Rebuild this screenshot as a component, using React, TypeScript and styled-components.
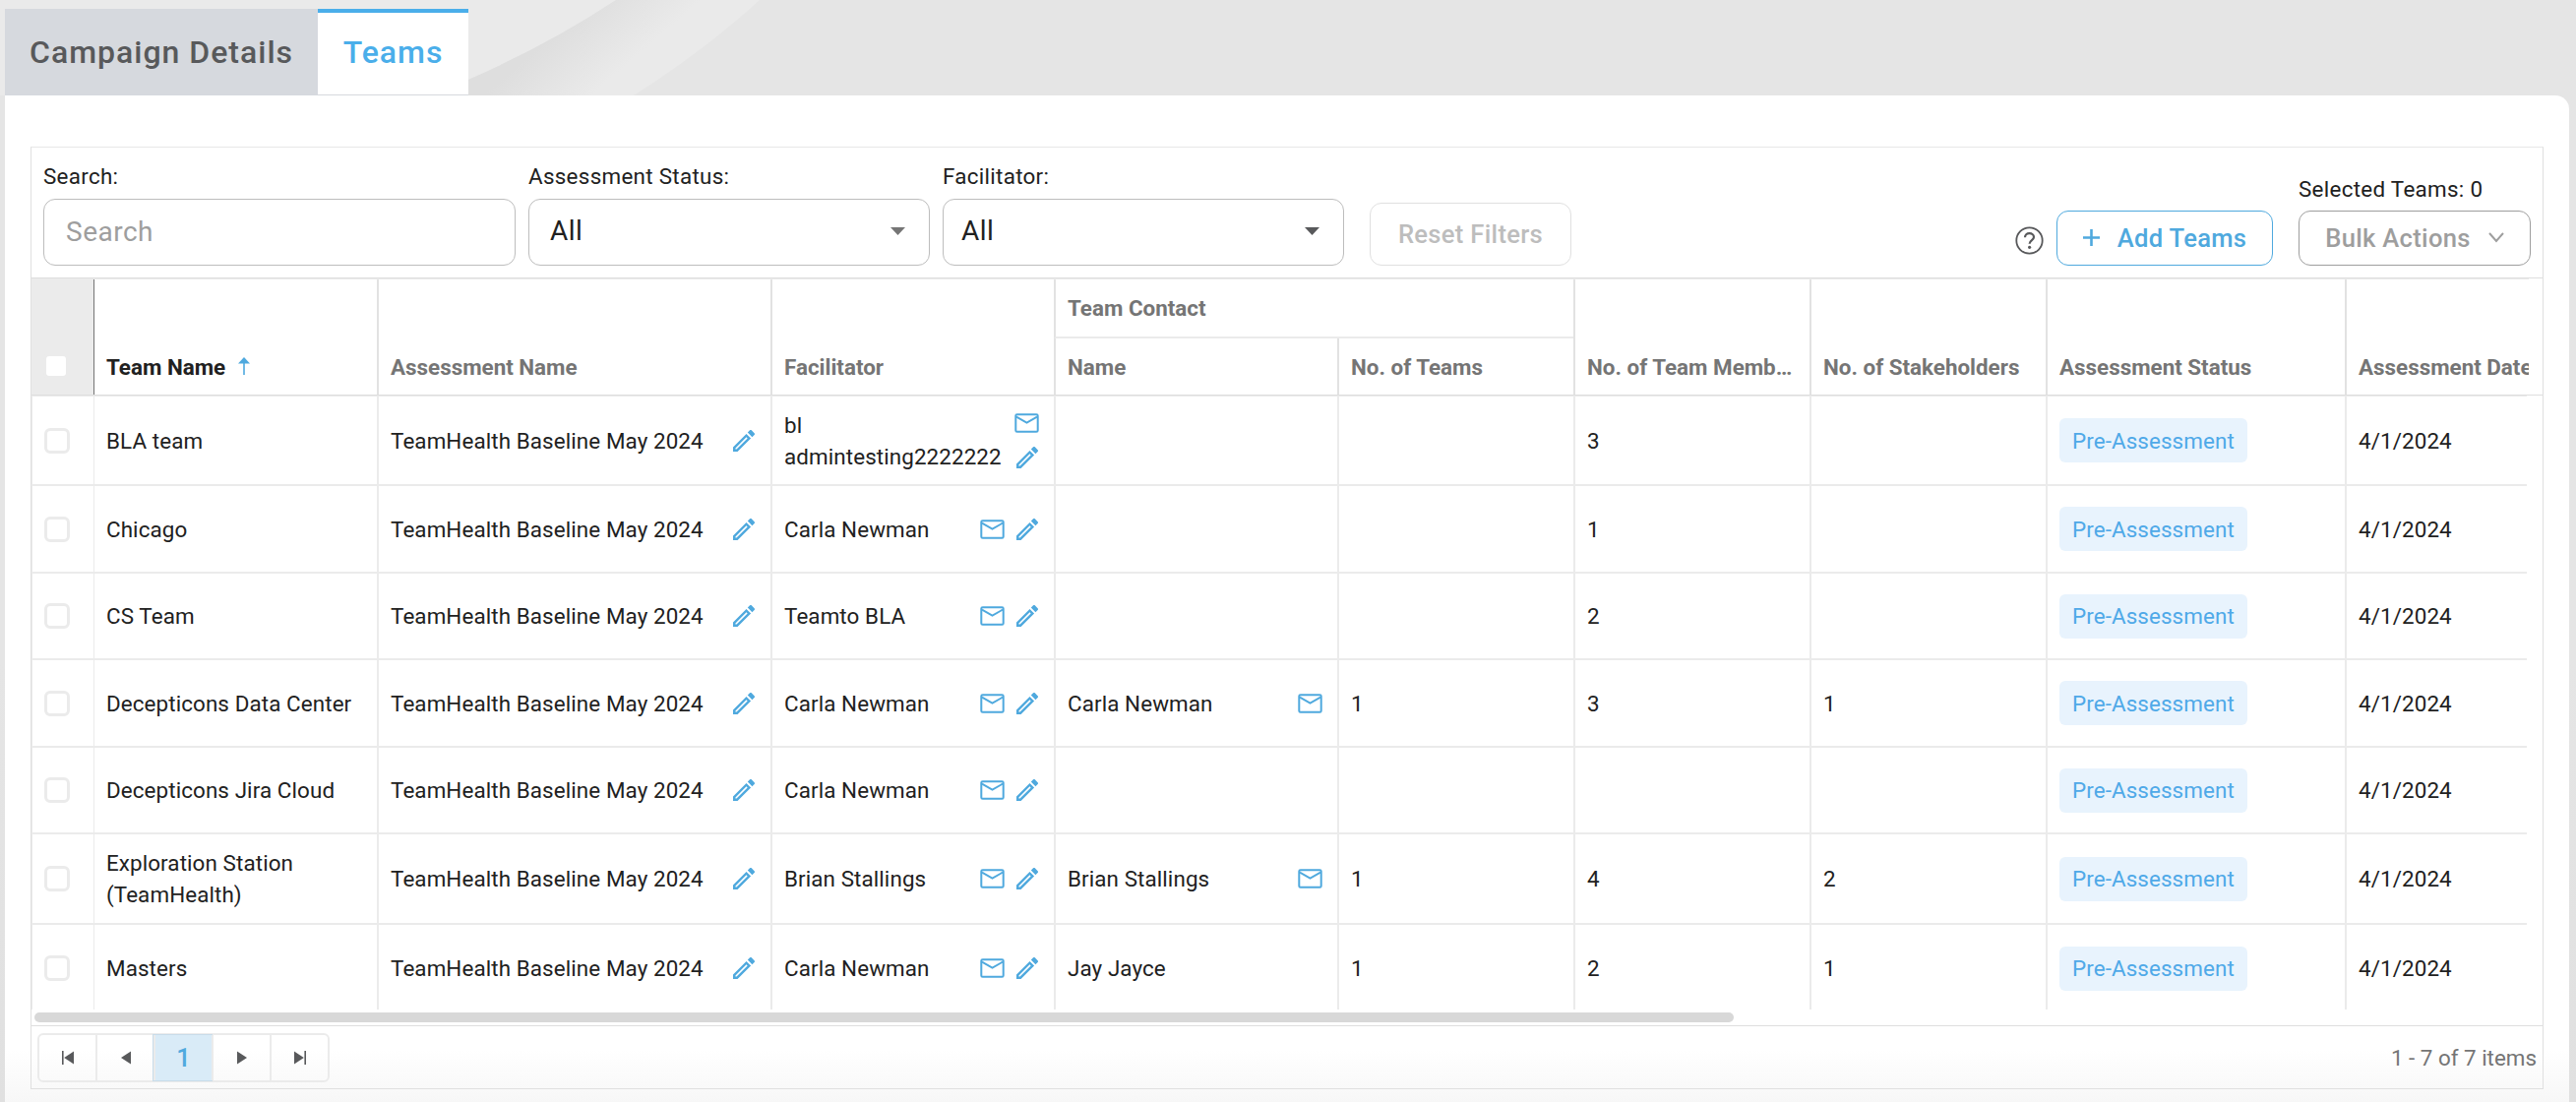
import styled, { createGlobalStyle, css } from "styled-components";

const GlobalStyle = createGlobalStyle`
	* {
		box-sizing: border-box;
	}
	body {
		margin: 0;
		background-color: #e5e5e5;
		font-family: Roboto, "Liberation Sans", sans-serif;
		font-size: 22.4px;
		line-height: 32px;
		color: #212121;
	}
	button, input {
		font-family: inherit;
	}
`;

const COLUMNS = "64px 287px 400px 288px 288px 240px 240px 240px 304px 187px";

const Page = styled.div`
	height: 1120px;
	overflow: hidden;
	position: relative;
	background: linear-gradient(#e5e5e5 60%, #e0e0e0);
`;

const Swoosh = styled.svg`
	position: absolute;
	top: 0;
	left: 0;
`;

const Tabs = styled.div`
	position: relative;
	display: flex;
	height: 97px;
	padding: 9px 0 0 5px;
`;

const Tab = styled.div<{ $active?: boolean }>`
	width: ${({ $active }) => ($active ? 153 : 318)}px;
	height: 88px;
	display: flex;
	align-items: center;
	justify-content: center;
	font-size: 32px;
	font-weight: 500;
	letter-spacing: 1px;
	color: #58595b;
	background-color: #d6d9de;
	${({ $active }) =>
		$active &&
		css`
			color: #4aaeea;
			background-color: #fff;
			border-top: 4px solid #4aaeea;
			border-bottom: 1px solid #d6d9de;
			padding-bottom: 3px;
		`}
`;

const Card = styled.div`
	position: relative;
	width: 2606px;
	height: 1023px;
	margin-left: 5px;
	padding: 52px 26px 0;
	border-top-right-radius: 14px;
	background: linear-gradient(#fff 970px, #f7f7f7 1023px);
`;

const Grid = styled.div`
	width: 2554px;
	height: 958px;
	border: 1px solid #e0e0e0;
	border-top-color: #e8e8e8;
	display: flex;
	flex-direction: column;
`;

const Toolbar = styled.div`
	height: 133px;
	padding: 0 12px 12px;
	border-bottom: 1px solid #dedede;
	display: flex;
	align-items: flex-end;
`;

const Field = styled.div<{ $width: number }>`
	width: ${({ $width }) => $width}px;
	margin-right: 13px;
`;

const Label = styled.div`
	letter-spacing: 0.3px;
	margin-bottom: 7px;
`;

const inputBox = css`
	width: 100%;
	height: 68px;
	border: 1px solid #bdbdbd;
	border-radius: 12px;
	background-color: #fff;
	font-size: 28px;
	letter-spacing: 0.5px;
`;

const SearchInput = styled.input`
	${inputBox}
	display: block;
	padding: 0 22px 2px;
	&::placeholder {
		color: #9e9e9e;
		opacity: 1;
	}
`;

const Select = styled.div<{ $pad: number }>`
	${inputBox}
	display: flex;
	align-items: center;
	justify-content: space-between;
	padding: 0 24px 2px ${({ $pad }) => $pad}px;
`;

const Button = styled.button<{ $color: string; $border: string; $width: number }>`
	width: ${({ $width }) => $width}px;
	height: 56px;
	padding: 0 0 1px;
	display: flex;
	align-items: center;
	justify-content: center;
	border: 1px solid ${({ $border }) => $border};
	border-radius: 12px;
	background-color: #fff;
	color: ${({ $color }) => $color};
	font-size: 25.6px;
	font-weight: 500;
	letter-spacing: 0.3px;
	white-space: nowrap;
`;

const ResetButton = styled(Button)`
	height: 64px;
	margin-left: 13px;
`;

const Help = styled.svg`
	margin: 0 13px 11px auto;
`;

const Bulk = styled.div`
	margin-left: 26px;
	${Label} {
		margin-bottom: 6px;
	}
`;

const HeaderRow = styled.div`
	flex: none;
	height: 119px;
	border-bottom: 1px solid #dedede;
`;

const HeaderGrid = styled.div`
	width: 2538px;
	height: 118px;
	overflow: hidden;
	border-top: 1px solid #ebebeb;
	display: grid;
	grid-template-columns: ${COLUMNS};
	grid-template-rows: 60px 57px;
`;

const HeaderCell = styled.div<{ $sorted?: boolean; $sub?: boolean }>`
	grid-row: ${({ $sub }) => ($sub ? "2" : "1 / span 2")};
	display: flex;
	align-items: flex-end;
	padding: 0 12px 12px;
	border-left: ${({ $sorted }) => ($sorted ? "none" : "2px solid #e2e2e2")};
	font-weight: 700;
	color: ${({ $sorted }) => ($sorted ? "#212121" : "#757575")};
	white-space: nowrap;
	min-width: 0;
	svg {
		margin: 0 0 8px 13px;
	}
`;

const Ellipsis = styled.span`
	overflow: hidden;
	text-overflow: ellipsis;
`;

const GroupCell = styled(HeaderCell)`
	grid-row: 1;
	grid-column: span 2;
	align-items: center;
	padding-bottom: 0;
	border-bottom: 2px solid #ebebeb;
`;

const CheckHeader = styled.div`
	grid-row: 1 / span 2;
	display: flex;
	align-items: flex-end;
	padding: 0 0 16px 12px;
	background-color: #ebebeb;
	border-right: 1px solid #757575;
`;

const Checkbox = styled.span`
	width: 26px;
	height: 26px;
	border: 3px solid #ebebeb;
	border-radius: 6px;
	background-color: #fff;
`;

const Body = styled.div`
	width: 2536px;
	height: 640px;
	border-top: 1px solid #ebebeb;
	overflow: hidden;
	flex: none;
	height: 624px;
`;

const Row = styled.div<{ $height: number }>`
	height: ${({ $height }) => $height}px;
	display: grid;
	grid-template-columns: ${COLUMNS};
	border-bottom: 2px solid #ebebeb;
	&:last-child {
		border-bottom: none;
	}
`;

const Cell = styled.div<{ $first?: boolean }>`
	display: flex;
	align-items: center;
	justify-content: space-between;
	padding: 0 15px 0 12px;
	border-left: ${({ $first }) => ($first ? "none" : "2px solid #ebebeb")};
	min-width: 0;
	letter-spacing: 0.1px;
`;

const CheckCell = styled.div`
	display: flex;
	align-items: center;
	padding-left: 12px;
	border-left: 1px solid #ebebeb;
	border-right: 1px solid #ebebeb;
`;

const Icons = styled.div<{ $stacked?: boolean }>`
	display: flex;
	flex-direction: ${({ $stacked }) => ($stacked ? "column" : "row")};
	gap: 10px;
	flex: none;
`;

const IconSlot = styled.span`
	width: 25px;
	height: 25px;
	display: flex;
	align-items: center;
	justify-content: center;
	color: #4fa9de;
`;

const Chip = styled.span`
	height: 45px;
	padding: 0 13px;
	display: flex;
	align-items: center;
	border-radius: 6px;
	background-color: #e8f3fd;
	color: #4fa9e8;
`;

const ScrollTrack = styled.div`
	flex: none;
	height: 16px;
	padding: 3px;
`;

const ScrollThumb = styled.div`
	width: 1727px;
	height: 10px;
	border-radius: 5px;
	background-color: #d8d8d8;
`;

const Pager = styled.div`
	flex: 1;
	display: flex;
	align-items: center;
	justify-content: space-between;
	border-top: 1px solid #dedede;
	padding: 0 6px;
	color: #757575;
`;

const PageButtons = styled.div`
	display: flex;
	width: 297px;
	height: 50px;
	border: 2px solid #ebebeb;
	border-radius: 6px;
`;

const PageButton = styled.div<{ $active?: boolean }>`
	flex: 1;
	display: flex;
	align-items: center;
	justify-content: center;
	color: #58595b;
	& + & {
		border-left: 2px solid #ebebeb;
	}
	${({ $active }) =>
		$active &&
		css`
			background-color: #d9ebf7;
			box-shadow: 0 0 0 1px #c8dcea;
			color: #4fa9de;
			font-size: 25.6px;
			font-weight: 500;
		`}
`;

const PencilIcon = () => (
	<IconSlot>
		<svg width="22" height="22" viewBox="3 3 18 18" fill="currentColor">
			<path d="M14.06 9l.94.94L5.92 19H5v-.92L14.06 9m3.6-6c-.25 0-.51.1-.7.29l-1.83 1.83 3.75 3.75 1.83-1.83c.39-.39.39-1.04 0-1.41l-2.34-2.34c-.2-.2-.45-.29-.71-.29m-3.6 3.19L3 17.25V21h3.75L17.81 9.94l-3.75-3.75z" />
		</svg>
	</IconSlot>
);

const MailIcon = () => (
	<IconSlot>
		<svg width="25" height="20" viewBox="0 0 25 20" fill="none" stroke="currentColor" strokeWidth="2">
			<rect x="1.3" y="1.2" width="22.4" height="17.6" rx="1.4" />
			<path d="M2 3.6l10.5 6 10.5-6" strokeWidth="1.8" />
		</svg>
	</IconSlot>
);

const Caret = ({ color }: { color: string }) => (
	<svg width="15" height="8" viewBox="0 0 15 8">
		<path d="M0 0h15L7.500 8z" fill={color} />
	</svg>
);

const PageArrow = ({ flip, bar }: { flip?: boolean; bar?: boolean }) => (
	<svg width="14" height="14" viewBox="0 0 14 14" fill="currentColor" transform={flip ? "scale(-1 1)" : undefined}>
		{bar && <path d="M1 0h1.600v14H1z" />}
		<path d={bar ? "M13 0.500v13L3.200 7z" : "M12 0.500v13L2 7z"} />
	</svg>
);

type Team = {
	name: string;
	facilitator: string;
	contact?: string;
	contactMail?: boolean;
	teams?: number;
	members?: number;
	stakeholders?: number;
	height: number;
	stacked?: boolean;
};

const teams: Team[] = [
	{ name: "BLA team", facilitator: "bl admintesting2222222", members: 3, height: 91, stacked: true },
	{ name: "Chicago", facilitator: "Carla Newman", members: 1, height: 89 },
	{ name: "CS Team", facilitator: "Teamto BLA", members: 2, height: 88 },
	{
		name: "Decepticons Data Center",
		facilitator: "Carla Newman",
		contact: "Carla Newman",
		contactMail: true,
		teams: 1,
		members: 3,
		stakeholders: 1,
		height: 89,
	},
	{ name: "Decepticons Jira Cloud", facilitator: "Carla Newman", height: 88 },
	{
		name: "Exploration Station (TeamHealth)",
		facilitator: "Brian Stallings",
		contact: "Brian Stallings",
		contactMail: true,
		teams: 1,
		members: 4,
		stakeholders: 2,
		height: 92,
	},
	{
		name: "Masters",
		facilitator: "Carla Newman",
		contact: "Jay Jayce",
		teams: 1,
		members: 2,
		stakeholders: 1,
		height: 88,
	},
];

const TeamRow = ({ team }: { team: Team }) => (
	<Row $height={team.height}>
		<CheckCell>
			<Checkbox />
		</CheckCell>
		<Cell $first>{team.name}</Cell>
		<Cell>
			TeamHealth Baseline May 2024
			<PencilIcon />
		</Cell>
		<Cell>
			{team.facilitator}
			<Icons $stacked={team.stacked}>
				<MailIcon />
				<PencilIcon />
			</Icons>
		</Cell>
		<Cell>
			{team.contact}
			{team.contactMail && <MailIcon />}
		</Cell>
		<Cell>{team.teams}</Cell>
		<Cell>{team.members}</Cell>
		<Cell>{team.stakeholders}</Cell>
		<Cell>
			<Chip>Pre-Assessment</Chip>
		</Cell>
		<Cell>4/1/2024</Cell>
	</Row>
);

const App = () => {
	return (
		<Page>
			<GlobalStyle />
			<Swoosh width="800" height="97" viewBox="0 0 800 97">
				<defs>
					<linearGradient id="fold" gradientUnits="userSpaceOnUse" x1="560" y1="38" x2="622" y2="110">
						<stop offset="0" stopColor="#dedede" />
						<stop offset="0.75" stopColor="#eaeaea" />
						<stop offset="1" stopColor="#eaeaea" />
					</linearGradient>
				</defs>
				<path d="M0 0H626Q560 44 476 81L440 97H0z" fill="#eaeaea" />
				<path d="M626 0H772Q716 51 644 97H440L476 81Q560 44 626 0z" fill="url(#fold)" />
			</Swoosh>
			<Tabs>
				<Tab>Campaign Details</Tab>
				<Tab $active>Teams</Tab>
			</Tabs>
			<Card>
				<Grid>
					<Toolbar>
						<Field $width={480}>
							<Label>Search:</Label>
							<SearchInput placeholder="Search" />
						</Field>
						<Field $width={408}>
							<Label>Assessment Status:</Label>
							<Select $pad={21}>
								All
								<Caret color="#757575" />
							</Select>
						</Field>
						<Field $width={408}>
							<Label>Facilitator:</Label>
							<Select $pad={18}>
								All
								<Caret color="#58595b" />
							</Select>
						</Field>
						<ResetButton $color="#bdbdbd" $border="#e0e0e0" $width={205}>
							Reset Filters
						</ResetButton>
						<Help width="29" height="29" viewBox="0 0 29 29" fill="none" stroke="#58595b" strokeWidth="1.800">
							<circle cx="14.500" cy="14.500" r="13.200" />
							<path d="M10 11.200c0-2.300 1.900-4 4.500-4s4.500 1.600 4.500 3.900c0 2.900-4.400 3.100-4.400 6.600" strokeWidth="2.200" />
							<circle cx="14.600" cy="21.300" r="1.600" fill="#58595b" stroke="none" />
						</Help>
						<Button $color="#4fa9de" $border="#4fa9de" $width={220}>
							<svg width="17" height="17" viewBox="0 0 17 17" style={{ marginRight: 18 }}>
								<path d="M8.500 0v17M0 8.500h17" stroke="#4fa9de" strokeWidth="2.600" />
							</svg>
							Add Teams
						</Button>
						<Bulk>
							<Label>Selected Teams: 0</Label>
							<Button $color="#9e9e9e" $border="#9e9e9e" $width={236}>
								Bulk Actions
								<svg width="16" height="11" viewBox="0 0 16 11" style={{ marginLeft: 18 }}>
									<path d="M1 1l7 8 7-8" fill="none" stroke="#9e9e9e" strokeWidth="2" />
								</svg>
							</Button>
						</Bulk>
					</Toolbar>
					<HeaderRow>
						<HeaderGrid>
							<CheckHeader>
								<Checkbox />
							</CheckHeader>
							<HeaderCell $sorted>
								Team Name
								<svg width="12" height="18" viewBox="0 0 12 18" fill="#4fa9de">
									<path d="M6 0l6 6.500H0z" />
									<path d="M5 6h2v12H5z" opacity="0.8" />
								</svg>
							</HeaderCell>
							<HeaderCell>Assessment Name</HeaderCell>
							<HeaderCell>Facilitator</HeaderCell>
							<GroupCell>Team Contact</GroupCell>
							<HeaderCell>
								<Ellipsis>No. of Team Members</Ellipsis>
							</HeaderCell>
							<HeaderCell>No. of Stakeholders</HeaderCell>
							<HeaderCell>Assessment Status</HeaderCell>
							<HeaderCell>Assessment Date</HeaderCell>
							<HeaderCell $sub style={{ gridColumn: 5 }}>
								Name
							</HeaderCell>
							<HeaderCell $sub>No. of Teams</HeaderCell>
						</HeaderGrid>
					</HeaderRow>
					<Body>
						{teams.map((team) => (
							<TeamRow key={team.name} team={team} />
						))}
					</Body>
					<ScrollTrack>
						<ScrollThumb />
					</ScrollTrack>
					<Pager>
						<PageButtons>
							<PageButton>
								<PageArrow bar />
							</PageButton>
							<PageButton>
								<PageArrow />
							</PageButton>
							<PageButton $active>1</PageButton>
							<PageButton>
								<PageArrow flip />
							</PageButton>
							<PageButton>
								<PageArrow flip bar />
							</PageButton>
						</PageButtons>
						1 - 7 of 7 items
					</Pager>
				</Grid>
			</Card>
		</Page>
	);
};

export default App;
